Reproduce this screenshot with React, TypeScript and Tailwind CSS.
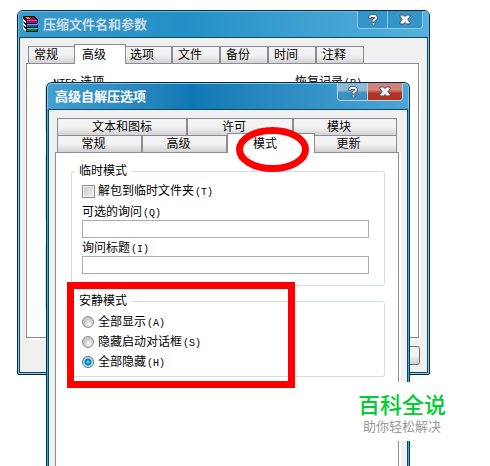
import { useState } from "react";
import type { ReactNode } from "react";
import clsx from "clsx";

const BACK_TABS = ["常规", "高级", "选项", "文件", "备份", "时间", "注释"];
const FRONT_TOP_TABS = ["文本和图标", "许可", "模块"];
const FRONT_TABS = ["常规", "高级", "模式", "更新"];

const SILENT_MODES = [
  { id: "show", label: "全部显示", hotkey: "A" },
  { id: "hide-start", label: "隐藏启动对话框", hotkey: "S" },
  { id: "hide-all", label: "全部隐藏", hotkey: "H" },
];

function Hotkey({ letter }: { letter: string }) {
  return <span className="ml-px font-['Liberation_Mono',monospace] text-[10px] leading-none">({letter})</span>;
}

function BooksIcon() {
  return (
    <svg width="17" height="17" viewBox="0 0 17 17" shapeRendering="crispEdges" aria-hidden="true">
      <path d="M1 0h11l4 4v3h-1v2h1v3h-1v1h1v3H5l-4-3v-2l1-1-1-1V7l1-1-1-1z" fill="#1a1020" />
      <path d="M2 1h9l4 3H5z" fill="#8d1230" />
      <path d="M3 1h3l2 2H6z" fill="#d8a020" />
      <path d="M5 4h10v1H5z" fill="#e838a0" />
      <path d="M5 5h10v2H5z" fill="#9c1070" />
      <path d="M1 3l3 2v2L1 5z" fill="#f0f0f0" />
      <path d="M5 8h10v1H5z" fill="#55b5ff" />
      <path d="M5 9h10v2H5z" fill="#1556a8" />
      <path d="M1 7l3 2v2L1 9z" fill="#fff" />
      <path d="M5 12h10v1H5z" fill="#35d69a" />
      <path d="M5 13h10v2H5z" fill="#0b7a4a" />
      <path d="M1 11l3 2v2l-3-2z" fill="#fff" />
    </svg>
  );
}

function CloseIcon() {
  return (
    <svg width="12" height="11" viewBox="0 0 12 11" aria-hidden="true">
      <path d="M1 1h3.800L6 2.600 7.200 1H11v2L8.800 5.500 11 8v2H7.200L6 8.400 4.800 10H1V8l2.200-2.500L1 3z" fill="#f4f4f4" stroke="#4d5566" />
    </svg>
  );
}

function HelpIcon() {
  return (
    <svg width="10" height="12" viewBox="0 0 10 12" fill="none" aria-hidden="true">
      <path d="M2 4.500V3l1-1h4l1 1v1.500L5.500 6.500V7.500M5.500 8.500v2.500" stroke="#4d5566" strokeWidth="3.600" />
      <path d="M2 4V3l1-1h4l1 1v1.500L5.500 6.500V7.500M5.500 9v1.800" stroke="#f4f4f4" strokeWidth="1.800" />
    </svg>
  );
}

interface DialogProps {
  title: string;
  active?: boolean;
  icon?: ReactNode;
  className?: string;
  children: ReactNode;
}

function Dialog({ title, active, icon, className, children }: DialogProps) {
  return (
    <section
      aria-label={title}
      className={clsx(
        "flex flex-col rounded-t-[6px] border border-[#08283c] px-px",
        active ? "border-b-0 bg-[#1bbcf0]" : "rounded-b-[2px] bg-[#8ccbe9] pb-px",
        className
      )}
    >
      <header
        className={clsx(
          "-mx-px flex h-[26px] shrink-0 items-start rounded-t-[5px] border-x border-t pr-[5px]",
          active
            ? "border-[#8cc8e6] bg-linear-to-r from-[#469fd0] via-[#0f78b4] via-40% to-[#4ba6d4] pl-[7px]"
            : "border-[#6fb9dc] bg-linear-to-r from-[#3a9bcd] via-[#2190c6] via-40% to-[#55b0dc] pl-[3px]"
        )}
      >
        {icon && <span className="mt-1 mr-1">{icon}</span>}
        <h1
          className={clsx(
            "min-w-0 flex-1 truncate pt-[3px] text-[13px] leading-5 font-bold",
            active ? "text-white" : "text-[#cfdce6]"
          )}
        >
          {title}
        </h1>
        <div
          className={clsx(
            "-mt-px flex h-[18px] w-[66px] overflow-hidden rounded-b-[4px] border border-t-0",
            active ? "border-[#b5d7e9]" : "border-[#8ecae6]"
          )}
        >
          <button
            type="button"
            aria-label="帮助"
            className={clsx(
              "flex w-[30px] items-center justify-center border-r",
              active
                ? "border-[#c3d4de] bg-linear-to-b from-[#8fbad6] from-40% to-[#3d8fbf] to-60%"
                : "border-[#8ecae6] bg-[#3496c8]"
            )}
          >
            <HelpIcon />
          </button>
          <button
            type="button"
            aria-label="关闭"
            className={clsx(
              "flex flex-1 items-center justify-center",
              active ? "bg-linear-to-b from-[#cf8479] from-40% to-[#b53220] to-60%" : "bg-[#3496c8]"
            )}
          >
            <CloseIcon />
          </button>
        </div>
      </header>
      <div
        className={clsx(
          "flex flex-1 flex-col border border-[#0b4868] bg-[#f0f0f0] pl-[6px]",
          active && "border-b-0"
        )}
      >
        {children}
      </div>
    </section>
  );
}

interface TabProps {
  label: string;
  selected?: boolean;
  className?: string;
  onClick?: () => void;
  children?: ReactNode;
}

function Tab({ label, selected, className, onClick, children }: TabProps) {
  return (
    <button
      type="button"
      role="tab"
      aria-selected={!!selected}
      onClick={onClick}
      className={clsx(
        "border border-b-0 border-[#8c8c96] text-xs leading-4 whitespace-nowrap",
        selected ? "bg-white" : "bg-linear-to-b from-[#f3f3f3] from-50% to-[#d2d2d2]",
        className
      )}
    >
      {label}
      {children}
    </button>
  );
}

function GroupBox({ legend, className, children }: { legend?: ReactNode; className?: string; children?: ReactNode }) {
  return (
    <fieldset className={clsx("min-w-0 rounded-[3px] border border-[#d3dde6] pl-[10px]", className)}>
      {legend && <legend className="-ml-[7px] px-1 leading-[14px]">{legend}</legend>}
      {children}
    </fieldset>
  );
}

function RadioRow({ label, hotkey, checked, onSelect }: { label: string; hotkey: string; checked: boolean; onSelect: () => void }) {
  return (
    <label className="flex h-5 items-center gap-1">
      <input
        type="radio"
        name="silent-mode"
        checked={checked}
        onChange={onSelect}
        className={clsx(
          "size-3 shrink-0 appearance-none rounded-full border",
          checked
            ? "border-[#3c7094] bg-[radial-gradient(circle,#5cd3fb_0_1px,#087ab9_2px_3px,#c5e6f5_4px)]"
            : "border-[#8e8f8f] bg-[radial-gradient(circle_at_60%_65%,#f2f2f2_1px,#c4c6c8_5px)]"
        )}
      />
      <span>
        {label}
        <Hotkey letter={hotkey} />
      </span>
    </label>
  );
}

function TextField({ id, label, hotkey }: { id: string; label: string; hotkey: string }) {
  return (
    <div className="flex flex-col">
      <label htmlFor={id} className="leading-4">
        {label}
        <Hotkey letter={hotkey} />
      </label>
      <input id={id} type="text" className="h-[18px] w-full border border-[#abadb3] bg-white px-1 outline-none" />
    </div>
  );
}

function ArchiveDialog() {
  return (
    <Dialog title="压缩文件名和参数" icon={<BooksIcon />} className="mr-[60px] ml-[17px]">
      <div role="tablist" className="z-10 ml-[2px] flex pt-[6px]">
        {BACK_TABS.map((tab) => (
          <Tab
            key={tab}
            label={tab}
            selected={tab === "高级"}
            className={clsx(
              "text-left",
              tab === "高级" ? "z-10 -mx-[2px] -mb-px h-5 w-[52px] pl-[7px]" : "mt-[2px] h-[17px] w-12 pl-[5px]"
            )}
          />
        ))}
      </div>
      <div className="mr-2 border border-[#8c8c96] bg-white pt-[11px] pr-3 pb-[26px] pl-[18px] text-xs shadow-[2px_2px_0_#fff]">
        <div className="grid grid-cols-[2fr_1fr] gap-1">
          <div className="flex flex-col gap-5">
            <GroupBox
              className="h-[58px]"
              legend={
                <>
                  <span className="font-['Liberation_Mono',monospace] text-[10px] leading-none">NTFS</span> 选项
                </>
              }
            />
            <GroupBox className="h-[70px]" />
            <GroupBox className="h-[68px]" />
          </div>
          <GroupBox
            legend={
              <>
                恢复记录
                <Hotkey letter="R" />
              </>
            }
          />
        </div>
      </div>
      <div className="flex justify-end pt-2 pr-[7px] pb-[7px]">
        <button
          type="button"
          aria-label="帮助"
          className="h-[19px] w-[70px] rounded-[3px] border border-[#707070] bg-linear-to-b from-[#f2f2f2] from-50% to-[#cfcfcf]"
        />
      </div>
    </Dialog>
  );
}

function SfxDialog() {
  const [mode, setMode] = useState("hide-all");
  const [tab, setTab] = useState("模式");

  return (
    <Dialog title="高级自解压选项" active className="absolute top-[82px] right-[80px] bottom-0 left-[46px]">
      <div role="tablist" className="z-10 mr-[10px] ml-[2px] pt-2">
        <div className="grid grid-cols-[130fr_106fr_104fr]">
          {FRONT_TOP_TABS.map((name) => (
            <Tab key={name} label={name} className={clsx("h-[17px]", name !== "文本和图标" && "pr-3")} />
          ))}
        </div>
        <div className="grid grid-cols-4">
          {FRONT_TABS.map((name) => (
            <Tab
              key={name}
              label={name}
              selected={name === tab}
              onClick={() => setTab(name)}
              className={clsx(
                "pr-3",
                name === tab ? "relative z-10 -mt-[2px] -mr-[3px] -mb-px h-5" : "h-[17px]"
              )}
            >
              {/* 红圈标注 */}
              {name === "模式" && (
                <svg
                  className="pointer-events-none absolute -top-[7px] left-2"
                  width="73"
                  height="45"
                  viewBox="0 0 73 45"
                  fill="none"
                  aria-hidden="true"
                >
                  <ellipse cx="36.5" cy="22.5" rx="33" ry="19" stroke="#f00" strokeWidth="7" />
                </svg>
              )}
            </Tab>
          ))}
        </div>
      </div>
      <div className="mr-2 flex flex-1 flex-col gap-2 border border-b-0 border-[#8c8c96] bg-white pt-[11px] pr-[13px] pl-[15px] text-xs shadow-[2px_0_0_#fff]">
        <GroupBox legend="临时模式" className="pr-[15px] pb-[11px]">
          <label className="mt-[5px] mb-[5px] flex h-4 items-center gap-[3px]">
            <input
              type="checkbox"
              className="size-[13px] shrink-0 appearance-none border border-[#8e8f8f] bg-linear-to-br from-[#c5c8cc] to-[#f4f4f4] shadow-[inset_0_0_0_1px_#f4f4f4] checked:bg-[#2a7ab0]"
            />
            <span>
              解包到临时文件夹
              <Hotkey letter="T" />
            </span>
          </label>
          <div className="flex flex-col gap-[2px]">
            <TextField id="optional-query" label="可选的询问" hotkey="Q" />
            <TextField id="query-title" label="询问标题" hotkey="I" />
          </div>
        </GroupBox>
        <div className="relative">
          <GroupBox legend="安静模式" className="pt-1 pb-1">
            {SILENT_MODES.map((m) => (
              <RadioRow
                key={m.id}
                label={m.label}
                hotkey={m.hotkey}
                checked={mode === m.id}
                onSelect={() => setMode(m.id)}
              />
            ))}
          </GroupBox>
          {/* 红框标注 */}
          <div className="pointer-events-none absolute -top-3 right-[90px] -bottom-[11px] -left-1 border-[7px] border-[#f00]" />
        </div>
      </div>
    </Dialog>
  );
}

export default function App() {
  return (
    <main className="relative h-screen overflow-hidden bg-white pt-[10px] font-['Liberation_Sans','Noto_Sans_CJK_SC',sans-serif] text-black">
      <ArchiveDialog />
      <SfxDialog />
      {/* 水印 */}
      <div className="absolute top-[382px] right-8 bg-white px-3 pt-3 pb-[6px] text-center">
        <p className="text-[22px] leading-6 font-medium text-[#0c3]">百科全说</p>
        <p className="text-[13px] leading-[17px] text-[#999]">助你轻松解决</p>
      </div>
    </main>
  );
}
